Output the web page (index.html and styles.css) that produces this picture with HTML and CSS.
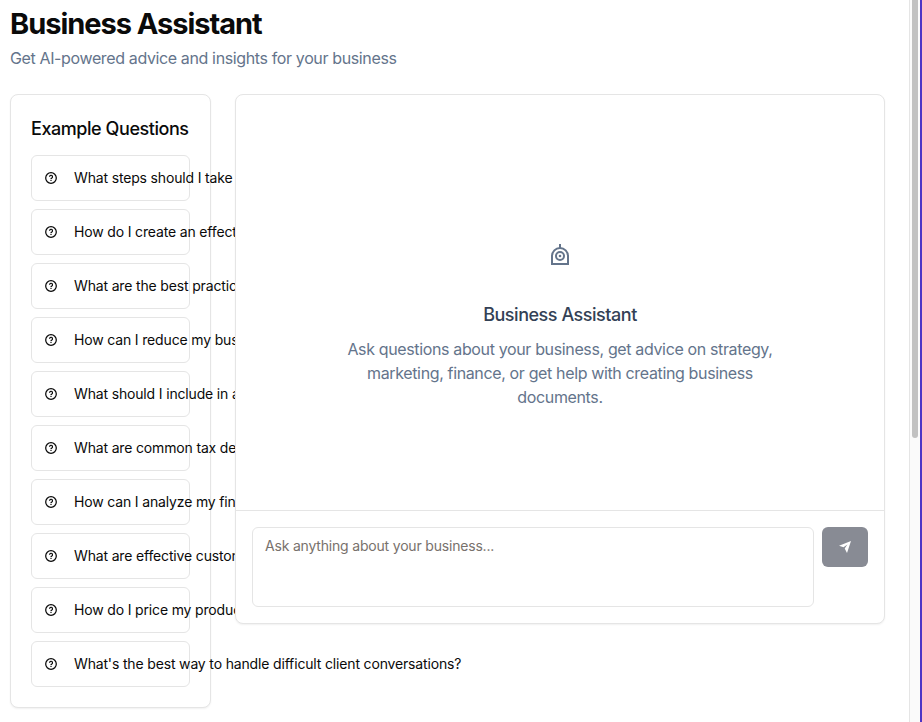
FILE: index.html
```
<!DOCTYPE html>
<html lang="en">
<head>
<meta charset="utf-8">
<title>Business Assistant</title>
<link rel="stylesheet" href="styles.css">
</head>
<body>
<svg class="defs" aria-hidden="true">
  <symbol id="help" viewBox="0 0 12 12">
    <circle cx="6" cy="6" r="5.3" fill="none" stroke="currentColor" stroke-width="1.25"/>
    <path d="M4.5 4.8a1.5 1.5 0 1 1 2.2 1.3Q6 6.4 6 7.1" fill="none" stroke="currentColor" stroke-width="1.2"/>
    <rect x="5.4" y="7.8" width="1.2" height="1.2" fill="currentColor"/>
  </symbol>
</svg>
<div class="app">
  <main class="page">
    <header>
      <h1 class="title">Business Assistant</h1>
      <p class="subtitle">Get AI-powered advice and insights for your business</p>
    </header>
    <div class="columns">
      <section class="card examples">
        <h2 class="heading">Example Questions</h2>
        <div class="questions">
          <button class="question"><svg class="help"><use href="#help"/></svg><span>What steps should I take to grow?</span></button>
          <button class="question"><svg class="help"><use href="#help"/></svg><span>How do I create an effective plan?</span></button>
          <button class="question"><svg class="help"><use href="#help"/></svg><span>What are the best practices?</span></button>
          <button class="question"><svg class="help"><use href="#help"/></svg><span>How can I reduce my business costs?</span></button>
          <button class="question"><svg class="help"><use href="#help"/></svg><span>What should I include in a proposal?</span></button>
          <button class="question"><svg class="help"><use href="#help"/></svg><span>What are common tax deductions?</span></button>
          <button class="question"><svg class="help"><use href="#help"/></svg><span>How can I analyze my finances?</span></button>
          <button class="question"><svg class="help"><use href="#help"/></svg><span>What are effective customer strategies?</span></button>
          <button class="question"><svg class="help"><use href="#help"/></svg><span>How do I price my products?</span></button>
          <button class="question"><svg class="help"><use href="#help"/></svg><span>What's the best way to handle difficult client conversations?</span></button>
        </div>
      </section>
      <section class="card chat">
        <div class="empty">
          <svg class="bot" width="18" height="21" viewBox="0 0 18 21" fill="none" stroke="currentColor" stroke-width="2">
            <path d="M9 0v4M1 20v-8a8 8 0 0 1 16 0v8z"/>
            <circle cx="9" cy="12" r="4"/>
            <circle cx="9" cy="12" r="1.3" fill="currentColor" stroke="none"/>
          </svg>
          <h3 class="empty-title">Business Assistant</h3>
          <p class="empty-text">Ask questions about your business, get advice on strategy, marketing, finance, or get help with creating business documents.</p>
        </div>
        <form class="composer">
          <textarea class="input" placeholder="Ask anything about your business..."></textarea>
          <button class="send" type="button" aria-label="Send">
            <svg width="12" height="12" viewBox="0 0 12 12" fill="currentColor"><path d="M12 0 0 4.7l4.5 1.5L8.4 3.5 5.7 7.6 8 12z"/></svg>
          </button>
        </form>
      </section>
    </div>
  </main>
  <div class="track"><div class="thumb"></div></div>
</div>
</body>
</html>
```
FILE: styles.css
```
* { box-sizing: border-box; }
body {
  margin: 0;
  background: #fff;
  color: #0a0a0a;
  font-family: Inter, "Liberation Sans", sans-serif;
  overflow: hidden;
}
h1, h2, h3, p { margin: 0; }
button, textarea { font: inherit; color: inherit; }
.defs { display: none; }
.app {
  display: flex;
  height: 722px;
  border-right: 2px solid #4e35c5;
}
.page { flex: 1; padding: 6px 24px 0 10px; }
.title { font-size: 29px; line-height: 36px; font-weight: 700; letter-spacing: -1.03px; }
.subtitle { margin-top: 4px; font-size: 16px; line-height: 24px; letter-spacing: -0.37px; color: #64748b; }
.columns {
  display: grid;
  grid-template-columns: 201px 650px;
  gap: 24px;
  align-items: start;
  margin-top: 24px;
}
.card {
  border: 1px solid #e5e5e5;
  border-radius: 8px;
  background: #fff;
  box-shadow: 0 1px 2px rgba(0, 0, 0, 0.06);
}
.examples { height: 614px; padding: 20px; }
.heading { font-size: 18px; line-height: 28px; font-weight: 500; letter-spacing: -0.44px; white-space: nowrap; }
.questions { display: flex; flex-direction: column; gap: 8px; margin-top: 12px; }
.question {
  display: flex;
  align-items: center;
  gap: 17px;
  height: 46px;
  padding: 0 13px;
  border: 1px solid #e5e5e5;
  border-radius: 6px;
  background: #fff;
  font-size: 14px;
  line-height: 20px;
  letter-spacing: -0.16px;
  white-space: nowrap;
}
.help { width: 12px; height: 12px; flex: none; }
.chat { position: relative; height: 530px; display: flex; flex-direction: column; }
.empty {
  flex: 1;
  display: flex;
  flex-direction: column;
  align-items: center;
  padding-top: 149px;
  text-align: center;
}
.bot { color: #64748b; }
.empty-title { margin-top: 36px; font-size: 18px; line-height: 28px; font-weight: 500; letter-spacing: -0.47px; color: #334155; }
.empty-text { width: 448px; margin-top: 8px; font-size: 16px; line-height: 24px; letter-spacing: -0.36px; color: #64748b; }
.composer { display: flex; gap: 8px; height: 113px; padding: 16px; border-top: 1px solid #e5e5e5; }
.input {
  flex: 1;
  height: 80px;
  padding: 8px 12px;
  border: 1px solid #e5e5e5;
  border-radius: 6px;
  background: #fff;
  font-size: 14px;
  line-height: 20px;
  letter-spacing: -0.19px;
  resize: none;
}
.input::placeholder { color: #78716c; opacity: 1; }
.send {
  display: flex;
  align-items: center;
  justify-content: center;
  width: 46px;
  height: 40px;
  padding: 0;
  border: 0;
  border-radius: 6px;
  background: #888b94;
  color: #fff;
}
.track { width: 11px; padding: 0 2px; border-left: 1px solid #e5e5e5; background: #fafafa; }
.thumb { width: 6px; height: 438px; border-radius: 0 0 3px 3px; background: #c1c1c1; }
```
